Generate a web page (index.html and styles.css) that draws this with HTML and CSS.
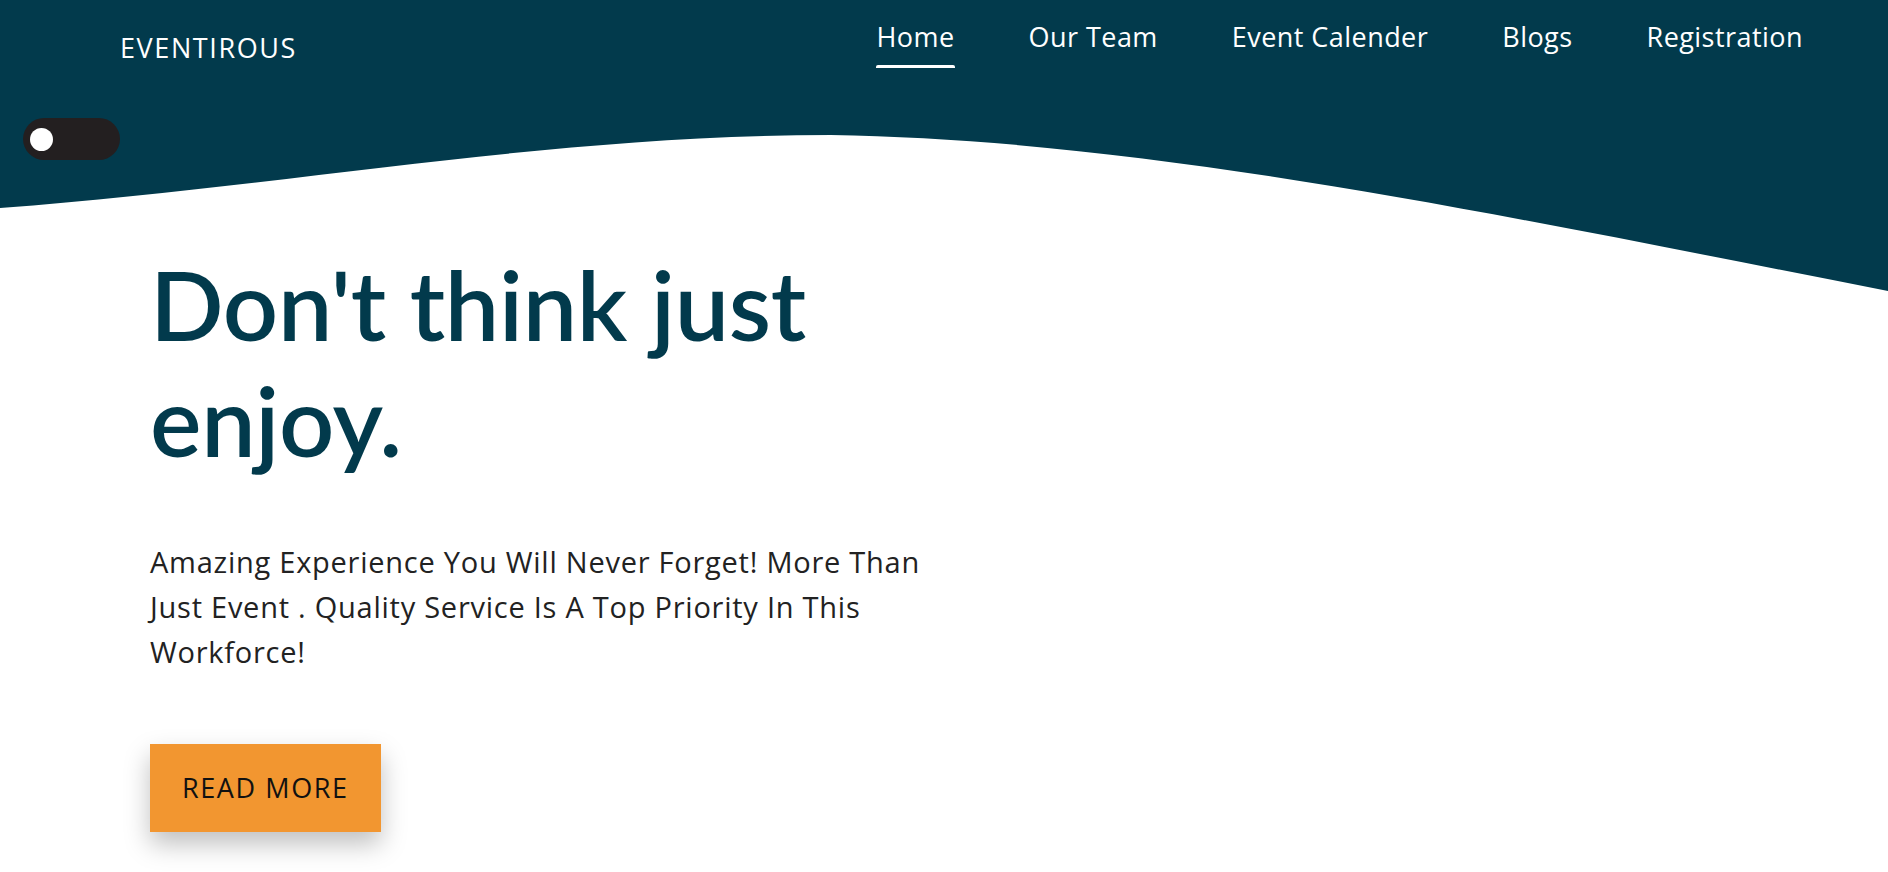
FILE: index.html
```html
<!DOCTYPE html>
<html lang="en">
<head>
<meta charset="utf-8">
<title>Eventirous</title>
<link rel="stylesheet" href="styles.css">
</head>
<body>
<div class="page">
  <svg class="wave" viewBox="0 0 1888 300" preserveAspectRatio="none" aria-hidden="true">
    <path d="M0,0 H1888 V291 C1500,215 1150,140 831,135 C550,135 300,185 0,208 Z" fill="#023a4c"/>
  </svg>
  <header class="topbar">
    <a class="logo" href="#">EVENTIROUS</a>
    <nav class="menu">
      <a class="menu-link active" href="#">Home</a>
      <a class="menu-link" href="#">Our Team</a>
      <a class="menu-link" href="#">Event Calender</a>
      <a class="menu-link" href="#">Blogs</a>
      <a class="menu-link" href="#">Registration</a>
    </nav>
  </header>
  <div class="toggle-row">
    <button class="toggle" type="button" aria-label="Toggle theme"><span class="knob"></span></button>
  </div>
  <main class="hero">
    <h1 class="title">Don't think just<br>enjoy.</h1>
    <p class="lead">Amazing Experience You Will Never Forget! More Than Just Event . Quality Service Is A Top Priority In This Workforce!</p>
    <a class="btn" href="#">READ MORE</a>
  </main>
</div>
</body>
</html>
```

FILE: styles.css
```css
* { box-sizing: border-box; }
html, body { margin: 0; padding: 0; }
body {
  font-family: "Open Sans", "Noto Sans", "Liberation Sans", sans-serif;
  background: #ffffff;
  color: #222222;
}
.page {
  position: relative;
  width: 100%;
  min-height: 872px;
  overflow: hidden;
}
.wave {
  position: absolute;
  top: 0;
  left: 0;
  width: 100%;
  height: 300px;
  z-index: 0;
  display: block;
}
.topbar {
  position: relative;
  z-index: 1;
  display: flex;
  justify-content: space-between;
  align-items: flex-start;
  height: 118px;
  padding: 0 81px 0 120px;
}
.logo {
  margin-top: 34px;
  font-size: 27px;
  line-height: 27px;
  letter-spacing: 1.6px;
  color: #ffffff;
  text-decoration: none;
}
.menu {
  display: flex;
  gap: 66px;
  margin-top: 23px;
}
.menu-link {
  display: flex;
  flex-direction: column;
  padding: 0 4px;
  font-size: 27px;
  line-height: 27px;
  letter-spacing: 0.45px;
  color: #ffffff;
  text-decoration: none;
}
.menu-link::after {
  content: "";
  display: block;
  height: 3px;
  margin-top: 15px;
  border-radius: 2px 2px 0 0;
  background: transparent;
}
.menu-link.active::after { background: #ffffff; }
.toggle-row {
  position: relative;
  z-index: 1;
  height: 42px;
  padding-left: 23px;
}
.toggle {
  display: flex;
  align-items: center;
  width: 97px;
  height: 42px;
  padding: 0 0 0 7px;
  border: 0;
  border-radius: 21px;
  background: #231f20;
}
.knob {
  width: 23px;
  height: 23px;
  border-radius: 50%;
  background: #ffffff;
}
.hero {
  position: relative;
  z-index: 1;
  padding: 86px 0 0 150px;
}
.title {
  margin: 0;
  font-family: Lato, "Open Sans", sans-serif;
  font-size: 97px;
  line-height: 116px;
  font-weight: 600;
  letter-spacing: -0.3px;
  color: #023a4c;
}
.lead {
  width: 790px;
  margin: 61px 0 0;
  font-size: 29px;
  line-height: 45px;
  letter-spacing: 0.75px;
  color: #222222;
}
.btn {
  display: inline-block;
  margin-top: 70px;
  height: 88px;
  padding: 0 32px;
  font-size: 27px;
  line-height: 88px;
  letter-spacing: 1.6px;
  color: #111111;
  text-decoration: none;
  background: #f29630;
  box-shadow: 0 12px 24px rgba(0, 0, 0, 0.25);
}
```
